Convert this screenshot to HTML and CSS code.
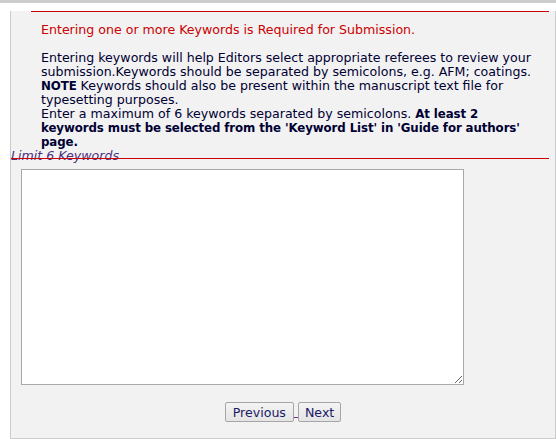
FILE: index.html
```html
<!DOCTYPE html>
<html>
<head>
<meta charset="utf-8">
<link rel="stylesheet" href="styles.css">
</head>
<body>
<div class="topbar"></div>
<div class="panel">
  <div class="rule rule-top"></div>
  <div class="content">
    <p class="required">Entering one or more Keywords is Required for Submission.</p>
    <p class="info">Entering keywords will help Editors select appropriate referees to review your submission.Keywords should be separated by semicolons, e.g. AFM; coatings.<br><b>NOTE</b> Keywords should also be present within the manuscript text file for typesetting purposes.<br>Enter a maximum of 6 keywords separated by semicolons. <b>At least 2 keywords must be selected from the 'Keyword List' in 'Guide for authors' page.</b></p>
  </div>
  <div class="limit">Limit 6 Keywords</div>
  <div class="rule rule-limit"></div>
  <textarea class="keywords"></textarea>
  <div class="actions"><span class="navlink"><button class="btn btn-prev">Previous</button> <button class="btn">Next</button></span></div>
</div>
</body>
</html>
```

FILE: styles.css
```css
html, body {
  margin: 0;
  padding: 0;
  background: #ffffff;
}
body {
  font-family: "DejaVu Sans", Verdana, sans-serif;
  font-size: 12.6px;
  line-height: 14px;
  color: #000033;
}
.topbar {
  height: 3px;
  background: #cccccc;
}
.panel {
  margin-left: 10px;
  width: 546px;
  box-sizing: border-box;
  border: 1px solid #cccccc;
  border-top: none;
  background: #f2f2f2;
  padding-bottom: 16px;
}
.rule {
  height: 1px;
  background: #cc0000;
  margin-right: 6px;
}
.rule-top {
  margin-top: 8px;
  margin-left: 20px;
}
.content {
  padding: 11px 21px 0 30px;
}
.content p {
  margin: 0;
}
.info b {
  font-size: 11.8px;
  letter-spacing: -0.1px;
}
.required {
  color: #cc0000;
  margin-bottom: 14px !important;
}
.limit {
  font-style: italic;
  color: #4d2f80;
  height: 14px;
}
.rule-limit {
  margin-top: -5px;
  position: relative;
}
.keywords {
  display: block;
  margin: 10px 0 0 10px;
  width: 443px;
  height: 216px;
  box-sizing: border-box;
  border: 1px solid #a9a9a9;
  background: #ffffff;
  padding: 2px;
  font-family: "DejaVu Sans", Verdana, sans-serif;
  font-size: 12px;
}
.actions {
  margin-top: 17px;
  text-align: center;
  line-height: 20px;
  height: 20px;
}
.navlink {
  text-decoration: underline;
  color: #663399;
}
.btn {
  font-family: "DejaVu Sans", Verdana, sans-serif;
  font-size: 12.6px;
  color: #1a1a66;
  height: 20px;
  padding: 0 6px;
  border: 1px solid #a6a6a6;
  border-radius: 2px;
  background: linear-gradient(#f4f4f4, #e4e4e4);
  vertical-align: top;
  margin: 0;
}
.btn-prev {
  padding: 0 7px;
}
```
